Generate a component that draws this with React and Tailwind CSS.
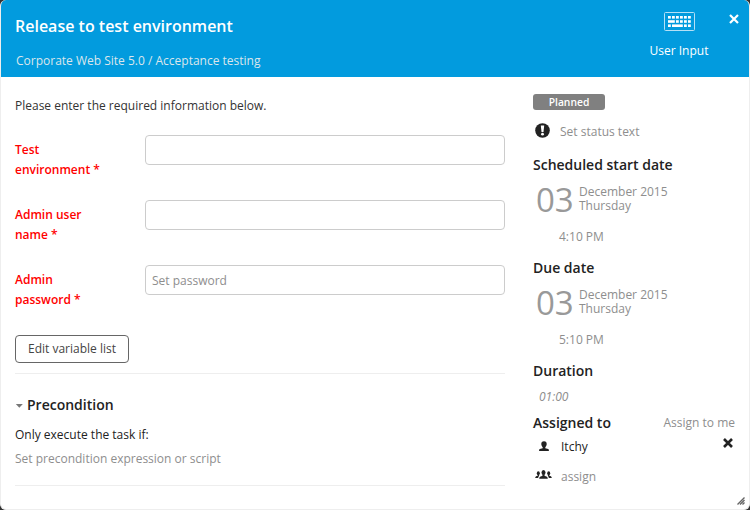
import React from "react";

const FIELDS = [
  { id: "env", lines: ["Test", "environment *"], placeholder: "", type: "text" },
  { id: "user", lines: ["Admin user", "name *"], placeholder: "", type: "text" },
  { id: "pass", lines: ["Admin", "password *"], placeholder: "Set password", type: "password" },
];

function KeyboardIcon() {
  return (
    <svg width="31" height="19" viewBox="0 0 31 19" fill="#fff">
      <rect x="0.5" y="0.5" width="30" height="18" rx="1" fill="none" stroke="#b5e0f6" />
      {[4, 8, 12, 16, 20, 24].map((x) => (
        <rect key={x} x={x} y="4" width="2.8" height="2.6" />
      ))}
      <rect x="4" y="8.2" width="6.8" height="2.6" />
      {[12, 16, 20, 24].map((x) => (
        <rect key={x} x={x} y="8.2" width="2.8" height="2.6" />
      ))}
      <rect x="4" y="12.4" width="2.8" height="2.6" />
      <rect x="8" y="12.4" width="10.8" height="2.6" />
      <rect x="20" y="12.4" width="2.8" height="2.6" />
      <rect x="24" y="12.4" width="2.8" height="2.6" />
    </svg>
  );
}

function CrossIcon({ size, color, weight }) {
  return (
    <svg width={size} height={size} viewBox="0 0 10 10" stroke={color} strokeWidth={weight}>
      <path d="M1 1L9 9M9 1L1 9" />
    </svg>
  );
}

function AlertIcon() {
  return (
    <svg width="15" height="15" viewBox="0 0 15 15">
      <circle cx="7.5" cy="7.5" r="7.3" fill="#222" />
      <path d="M5.8 2.4H9.2L8.5 9H6.5Z" fill="#fff" />
      <circle cx="7.5" cy="11.2" r="1.4" fill="#fff" />
    </svg>
  );
}

function UserIcon() {
  return (
    <svg width="10" height="11" viewBox="0 0 10 11" fill="#222">
      <path d="M5 0.2C6.9 0.2 7.8 1.4 7.7 3.2C7.6 4.7 6.8 5.6 6.3 6.2V7.3L9.2 8C9.8 8.3 9.9 9 9.9 10H0.1C0.1 9 0.2 8.3 0.8 8L3.7 7.3V6.2C3.2 5.6 2.4 4.7 2.3 3.2C2.2 1.4 3.1 0.2 5 0.2Z" />
    </svg>
  );
}

function GroupIcon() {
  return (
    <svg width="17" height="9" viewBox="0 0 17 9" fill="#222">
      <ellipse cx="3.3" cy="3.2" rx="1.5" ry="2" />
      <ellipse cx="13.7" cy="3.2" rx="1.5" ry="2" />
      <path d="M0.2 8C0.2 6.6 1 6.2 2.7 5.7V4.5H4V5.4L4.4 5.8C3.5 6.4 3.3 7 3.2 8Z" />
      <path d="M16.8 8C16.8 6.6 16 6.2 14.3 5.7V4.5H13V5.4L12.6 5.8C13.5 6.4 13.7 7 13.8 8Z" />
      <ellipse cx="8.5" cy="2.6" rx="2" ry="2.5" />
      <path d="M7.4 4.5H9.6V6C11.5 6.4 12.8 6.8 12.8 8.7H4.2C4.2 6.8 5.5 6.4 7.4 6Z" />
    </svg>
  );
}

function ResizeGrip() {
  return (
    <svg className="absolute right-[4px] bottom-[4px]" width="8" height="8" viewBox="0 0 8 8" stroke="#666" strokeWidth="1.4">
      <path d="M0.5 7.5L7.5 0.5M3 7.5L7.5 3M5.5 7.5L7.5 5.5" />
    </svg>
  );
}

function DateBlock({ title, time }) {
  return (
    <section className="h-[103px]">
      <h2 className="h-5 text-[14px] leading-5 font-semibold text-[#222]">{title}</h2>
      <div className="flex h-[52px] pt-2 pl-[3px]">
        <span className="w-[43px] text-[33px] leading-[33px] text-[#999]">03</span>
        <p className="mt-0.5 leading-[14px] text-[#8e8e8e]">
          December 2015
          <br />
          Thursday
        </p>
      </div>
      <div className="pl-[26px] leading-5 text-[#8e8e8e]">{time}</div>
    </section>
  );
}

export default function App() {
  return (
    <div className="h-[510px] w-[750px] overflow-hidden bg-[#333] font-['Open_Sans',sans-serif] text-[12px]">
      <div className="relative flex h-full flex-col overflow-hidden rounded-[6px] border border-t-0 border-[#eee] bg-white">
        <header className="-mx-px flex h-[77px] shrink-0 justify-between bg-[#029bde] pl-[15px] text-white">
          <div className="pt-4">
            <h1 className="text-[16px] leading-5 font-semibold">Release to test environment</h1>
            <p className="mt-[15px] pl-px leading-5 text-[#dbe6ec]">Corporate Web Site 5.0 / Acceptance testing</p>
          </div>
          <div className="flex">
            <div className="flex w-[80px] flex-col items-center pt-3">
              <KeyboardIcon />
              <span className="mt-[10px] leading-5">User Input</span>
            </div>
            <button className="mt-[14px] ml-[10px] flex h-[10px] w-[21px]">
              <CrossIcon size={10} color="#fff" weight={2.2} />
            </button>
          </div>
        </header>

        <div className="flex min-h-0 flex-1">
          <main className="ml-[14px] w-[490px]">
            <p className="pt-[19px] leading-5 text-[#333]">Please enter the required information below.</p>
            <form className="mt-[19px]">
              {FIELDS.map((field) => (
                <div key={field.id} className="flex h-[65px]">
                  <label htmlFor={field.id} className="w-[130px] pt-[5px] leading-5 font-semibold text-[#f00]">
                    {field.lines[0]}
                    <br />
                    {field.lines[1]}
                  </label>
                  <input
                    id={field.id}
                    type={field.type}
                    placeholder={field.placeholder}
                    className="h-[30px] w-[360px] rounded-[4px] border border-[#ccc] px-[6px] placeholder:text-[#8e8e8e]"
                  />
                </div>
              ))}
              <button type="button" className="mt-[5px] block h-[28px] w-[114px] rounded-[4px] border border-[#666] text-[#444]">
                Edit variable list
              </button>
            </form>
            <section className="mt-[10px] h-[113px] border-y border-[#eee] pt-[21px]">
              <h2 className="flex items-center text-[14px] leading-5 font-semibold text-[#222]">
                <svg width="12" height="6" viewBox="0 0 12 6" className="mt-[2px]">
                  <path d="M0.8 1H7.8L4.3 4.8Z" fill="#777" />
                </svg>
                Precondition
              </h2>
              <p className="mt-[10px] leading-5 text-[#222]">Only execute the task if:</p>
              <p className="mt-1 leading-5 text-[#8e8e8e]">Set precondition expression or script</p>
            </section>
          </main>

          <aside className="ml-[28px] w-[202px] pt-[17px]">
            <div className="flex h-4 w-[72px] items-center justify-center rounded-[3px] bg-[#808080] pt-px text-[10.3px] font-semibold text-white">
              Planned
            </div>
            <div className="mt-3 flex h-5 items-center pl-[2px] text-[#8e8e8e]">
              <span className="mr-[10px] -mt-[4px]"><AlertIcon /></span>
              Set status text
            </div>
            <div className="mt-[13px]">
              <DateBlock title="Scheduled start date" time="4:10 PM" />
              <DateBlock title="Due date" time="5:10 PM" />
            </div>
            <h2 className="text-[14px] leading-5 font-semibold text-[#222]">Duration</h2>
            <p className="mt-[6px] pl-[6px] leading-5 text-[#8e8e8e] italic">01:00</p>
            <div className="mt-[6px] flex items-center justify-between">
              <h2 className="text-[14px] leading-5 font-semibold text-[#222]">Assigned to</h2>
              <span className="leading-5 text-[#8e8e8e]">Assign to me</span>
            </div>
            <div className="mt-1 flex h-5 items-center pl-[6px] text-[#222]">
              <span className="-mt-[2px] w-[22px]"><UserIcon /></span>
              Itchy
              <span className="-mt-[8px] mr-[2px] ml-auto"><CrossIcon size={10} color="#222" weight={2.6} /></span>
            </div>
            <div className="mt-[10px] flex h-5 items-center pl-[2px] text-[#8e8e8e]">
              <span className="-mt-[6px] w-[26px]"><GroupIcon /></span>
              assign
            </div>
          </aside>
        </div>
        <ResizeGrip />
      </div>
    </div>
  );
}
